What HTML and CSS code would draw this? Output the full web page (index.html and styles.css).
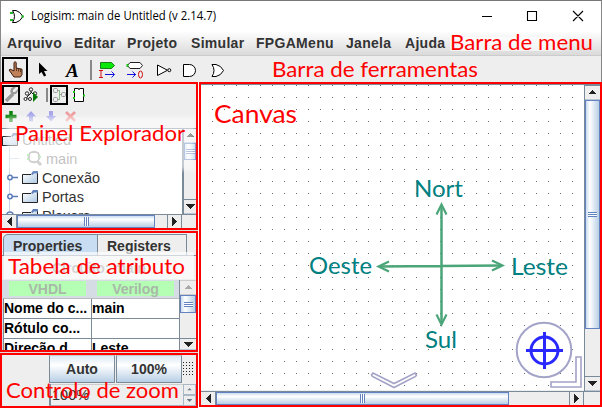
FILE: index.html
```html
<!DOCTYPE html>
<html lang="pt">
<head>
<meta charset="utf-8">
<title>Logisim: main de Untitled (v 2.14.7)</title>
<link rel="stylesheet" href="styles.css">
</head>
<body>
<svg class="defs" width="0" height="0">
  <defs>
    <symbol id="up" viewBox="0 0 9 5"><path d="M4 0h1v1h1v1h1v1h1v1H1V3h1V2h1V1h1z" fill="currentColor"/></symbol>
    <symbol id="down" viewBox="0 0 9 5"><path d="M0 0h9v1H8v1H7v1H6v1H5v1H4V4H3V3H2V2H1V1H0z" fill="currentColor"/></symbol>
    <symbol id="left" viewBox="0 0 5 9"><path d="M5 0v9H4V8H3V7H2V6H1V5H0V4h1V3h1V2h1V1h1V0z" fill="currentColor"/></symbol>
    <symbol id="right" viewBox="0 0 5 9"><path d="M0 0v9h1V8h1V7h1V6h1V5h1V4H4V3H3V2H2V1H1V0z" fill="currentColor"/></symbol>
    <linearGradient id="fold" x2="1" y2="1"><stop stop-color="#fff"/><stop offset="1" stop-color="#a9c6e2"/></linearGradient>
    <symbol id="folder" viewBox="0 0 17 14">
      <path d="M.5 13V3.500h8l1-1h6V13z" fill="url(#fold)"/>
      <path d="M.5 13V3.500h8.500M0 12.500h15.500V2" fill="none" stroke="#222"/>
      <path d="M9 3l2-3h5v2.500h-4L10.500 4z" fill="#5d7fb8"/>
    </symbol>
    <pattern id="grid" x="212" y="85" width="12" height="12" patternUnits="userSpaceOnUse"><rect width="1" height="1" fill="#6e6e6e"/></pattern>
  </defs>
</svg>
<div class="window">
  <header class="titlebar">
    <svg width="14" height="13" viewBox="0 0 14 13"><path d="M2.500.5H6q4 1 7 6-3 5-7 6H2.500q4-6 0-12z" fill="#fff" stroke="#000"/><path d="M0 3h3M0 10h3M12.500 5v3" stroke="#26b526" stroke-width="2"/></svg>
    <svg class="title" width="190" height="20"><text x="0" y="14" textLength="185" lengthAdjust="spacingAndGlyphs">Logisim: main de Untitled (v 2.14.7)</text></svg>
    <svg class="controls" width="104" height="12" viewBox="0 0 104 12"><path d="M0 6.500h10M45.500 1.500h9v9h-9zM91 1l10 10M101 1L91 11" fill="none" stroke="#000" stroke-width="1.100"/></svg>
  </header>
  <nav class="menubar">
    <span class="m1">Arquivo</span><span class="m2">Editar</span><span class="m3">Projeto</span><span class="m4">Simular</span><span class="m5">FPGAMenu</span><span class="m6">Janela</span><span>Ajuda</span>
  </nav>
  <div class="toolbar">
    <svg width="240" height="26" viewBox="0 56 240 26">
      <rect x="3" y="58" width="24" height="24" fill="#eee" stroke="#000" stroke-width="2"/>
      <path d="M14 71v-8.500q1.200-1.500 2.200 0V68l5.800 1.200v5.300L20.500 77H14l-5-7q1-1.500 3 0z" fill="#c08058" stroke="#3a1d10"/>
      <path d="M16.500 68v3M18.500 68.500v3M20.500 69v3" stroke="#3a1d10" stroke-width=".7"/>
      <path d="M39 62.500v11.500l2.500-2 2.500 4.500 2.200-1-2.200-4.500h3.500z" fill="#000"/>
      <text class="letter-tool" x="66" y="77">A</text>
      <path d="M91 60v20" stroke="#888" stroke-width="2"/>
      <path d="M100.500 62.500h11l3 3-3 3h-11z" fill="#0ae80a" stroke="#168016"/>
      <path d="M99 70.500h4M101 70.500v7M99 77.500h4" stroke="#c11"/>
      <path d="M105 74.500h9M111.500 71.500l3 3-3 3M127 74.500h9M132.500 71.500l3 3-3 3" fill="none" stroke="#11d"/>
      <path d="M130 62.500h10l2.500 3-2.500 3h-10l-2.500-3z" fill="#fff" stroke="#222"/><path d="M127.500 64v3" stroke="#18bd18" stroke-width="2"/>
      <ellipse cx="140.500" cy="74.500" rx="2" ry="3.500" fill="none" stroke="#c11"/>
      <path d="M157.500 65v10.500l10-5.250z" fill="#fff" stroke="#000"/><circle cx="169.300" cy="70.200" r="1.500" fill="#fff" stroke="#000"/>
      <path d="M183.500 64.500h6a6 6 0 010 12h-6z" fill="#fff" stroke="#000"/>
      <path d="M212 64.500h4q5 1 7.500 6-2.500 5-7.500 6h-4q4-6 0-12z" fill="#fff" stroke="#000"/>
    </svg>
  </div>
  <main class="workspace">
    <aside class="side">
      <section class="explorer">
        <svg class="tools" width="194" height="44" viewBox="2 84 194 44">
          <rect x="3" y="86" width="16" height="18" fill="#eee" stroke="#000" stroke-width="2"/>
          <path d="M6 101l7-7" stroke="#999" stroke-width="3.500"/><path d="M16 87l-3 3v2h2l3-3q0 5-4 5.500Q9.500 94 10.500 90 12 86 16 87z" fill="#999"/>
          <path d="M31 90v3l-4 4v2M31 92l4 4" fill="none" stroke="#222"/><g fill="#fff" stroke="#222"><circle cx="31" cy="89.500" r="1.700"/><circle cx="27" cy="93.500" r="1.700"/><circle cx="35" cy="93.500" r="1.700"/><circle cx="25.500" cy="99" r="1.500"/><circle cx="30" cy="99" r="1.500"/></g><path d="M33 92v10l5-5z" fill="#087808"/>
          <path d="M47 88v14" stroke="#888" stroke-width="2"/>
          <rect x="51" y="86" width="16" height="18" fill="#eee" stroke="#000" stroke-width="2"/>
          <path d="M56 90.500h4M59.500 90v9M56 99.500h4M59 94.500h3" stroke="#88b888" fill="none"/><g fill="#eee" stroke="#999"><rect x="53.500" y="88.500" width="4" height="4" rx="1"/><rect x="53.500" y="97.500" width="4" height="4" rx="1"/><rect x="61.500" y="92.500" width="4" height="4" rx="1"/></g>
          <path d="M74.500 88.500h9v13h-9z" fill="#fff" stroke="#000"/><path d="M77.500 88.500q1.500 2 3 0" fill="#fff" stroke="#000"/><path d="M73 92h2M73 98h2M83 95.500h2" stroke="#1ccc1c" stroke-width="2"/>
          <path d="M11 111v11M5.500 116.500h11" stroke="#078007" stroke-width="3.500"/>
          <path d="M31 111l5 5.500h-3v5h-4v-5h-3zM49 111h4v5h3l-5 5.500-5-5.500h3z" fill="#a5a5e8"/>
          <path d="M66 112l9 9M75 112l-9 9" stroke="#e99" stroke-width="2.600"/>
        </svg>
        <div class="tree-row">
          <div class="tree">
            <svg class="branches" width="24" height="86" viewBox="2 129 24 86"><path d="M9.500 147v67M9.500 158.500h10" stroke="#c7d3e6" fill="none"/><g fill="#fff" stroke="#5b7cb8" stroke-width="1.500"><path d="M12 177.500h6M12 196.500h6"/><circle cx="10" cy="177.500" r="2.200"/><circle cx="10" cy="196.500" r="2.200"/><path d="M7 215a3 3 0 016 0"/></g></svg>
            <div class="item root"><svg width="17" height="14"><use href="#folder"/></svg><span>Untitled</span></div>
            <div class="item main"><svg width="17" height="17" viewBox="0 0 17 17"><path d="M3.500 2.500h9v9h-9z" fill="#fff" stroke="#999"/><circle cx="8" cy="7" r="5.500" fill="none" stroke="#999" stroke-width="1.600"/><path d="M11 11l4 4" stroke="#999" stroke-width="3"/><path d="M1 5h2M1 9h2M13 7h2" stroke="#7d7" stroke-width="2"/></svg><span>main</span></div>
            <div class="item"><svg width="17" height="14"><use href="#folder"/></svg><span>Conexão</span></div>
            <div class="item"><svg width="17" height="14"><use href="#folder"/></svg><span>Portas</span></div>
            <div class="item"><svg width="17" height="14"><use href="#folder"/></svg><span>Plexers</span></div>
          </div>
          <div class="vbar"><i class="btn"><svg width="9" height="5"><use href="#up"/></svg></i><i class="thumb t1"><b class="grip-v"></b></i><i class="track"></i><i class="btn"><svg width="9" height="5"><use href="#down"/></svg></i></div>
        </div>
        <div class="hbar"><i class="btn"><svg width="5" height="9"><use href="#left"/></svg></i><i class="thumb h1"><b class="grip-h"></b></i><i class="track"></i><i class="btn"><svg width="5" height="9"><use href="#right"/></svg></i><i class="corner"></i></div>
        <div class="veil veil-tree"></div>
        <svg class="note n-explorer" width="180" height="32"><text x="0" y="22" textLength="170" lengthAdjust="spacingAndGlyphs">Painel Explorador</text></svg>
      </section>
      <section class="attributes">
        <div class="tabs"><span class="tab active">Properties</span><span class="tab">Registers</span></div>
        <div class="circuit">Circuito: main</div>
        <div class="attr-row">
          <div class="attr-main">
            <div class="langs"><span>VHDL</span><span>Verilog</span></div>
            <div class="table"><span>Nome do c...</span><span>main</span><span>Rótulo co...</span><span></span><span>Direção d...</span><span>Leste</span></div>
          </div>
          <div class="vbar"><i class="btn faded"><svg width="9" height="5"><use href="#up"/></svg></i><i class="thumb t2"><b class="grip-v"></b></i><i class="track"></i><i class="btn low"><svg width="9" height="5"><use href="#down"/></svg></i></div>
        </div>
        <div class="veil veil-attr"></div>
        <svg class="note n-attr" width="185" height="32"><text x="0" y="22" textLength="177" lengthAdjust="spacingAndGlyphs">Tabela de atributo</text></svg>
      </section>
      <section class="zoom">
        <div class="zoom-row"><span class="zbtn">Auto</span><span class="zbtn">100%</span><svg width="12" height="28" viewBox="184 355 12 28"><path d="M184 362.500h11M184 365.500h11M184 368.500h11M184 371.500h11M184 374.500h11" stroke="#222" stroke-dasharray="1 2"/></svg></div>
        <div class="spin-row"><span class="field">100%</span><span class="spin"><i><svg width="5" height="3" viewBox="0 0 9 5"><use href="#up"/></svg></i><i><svg width="5" height="3" viewBox="0 0 9 5"><use href="#down"/></svg></i></span></div>
        <svg class="note n-zoom" width="180" height="32"><text x="0" y="22" textLength="173" lengthAdjust="spacingAndGlyphs">Controlo de zoom</text></svg>
      </section>
    </aside>
    <section class="canvas">
      <div class="canvas-row">
        <svg class="sheet" width="383" height="305" viewBox="201 85 383 305">
          <rect x="201" y="85" width="383" height="305" fill="#fff"/>
          <rect x="201" y="85" width="376" height="305" fill="url(#grid)"/>
          <g fill="none" stroke="#4aa578" stroke-width="2.500"><path d="M441.500 205v119M379 266.500l123-1"/><path d="M436.500 214.500l5-10 5 10M436.500 314.500l5 10 5-10M389 261.500l-10.500 5 10.500 5M492 260.500l10.500 5-10.500 5" stroke-width="2.200"/></g>
          <g class="points"><text x="414" y="196.500" textLength="49" lengthAdjust="spacingAndGlyphs">Nort</text><text x="309" y="273.500" textLength="63" lengthAdjust="spacingAndGlyphs">Oeste</text><text x="511" y="275" textLength="57" lengthAdjust="spacingAndGlyphs">Leste</text><text x="425" y="347.500" textLength="32" lengthAdjust="spacingAndGlyphs">Sul</text></g>
          <text class="red big" x="214" y="122.500" textLength="83" lengthAdjust="spacingAndGlyphs">Canvas</text>
          <circle cx="544" cy="350" r="27.300" fill="#fff" stroke="#a3a3c8" stroke-width="2"/>
          <g fill="none" stroke="#2828ff" stroke-width="3"><circle cx="544.500" cy="350.500" r="13.500"/><path d="M544.500 332v37M526 350.500h37"/></g>
          <g fill="#fff" stroke="#a3a3c8" stroke-width="1.600"><path d="M576 357h5v30h-30v-5h25z"/><path d="M371.500 375l1.500-2 21 10.500 21-10.500 1.500 2-1 1.500-21.500 11-21.500-11z"/></g>
        </svg>
        <div class="vbar"><i class="btn"><svg width="9" height="5"><use href="#up"/></svg></i><i class="thumb t3"><b class="grip-v"></b></i><i class="track"></i><i class="btn"><svg width="9" height="5"><use href="#down"/></svg></i></div>
      </div>
      <div class="hbar"><i class="btn"><svg width="5" height="9"><use href="#left"/></svg></i><i class="thumb h2"><b class="grip-h"></b></i><i class="track"></i><i class="btn"><svg width="5" height="9"><use href="#right"/></svg></i><i class="corner wide"></i></div>
    </section>
  </main>
  <div class="veil veil-menu"></div>
  <svg class="note n-menu" width="150" height="32"><text x="0" y="22" textLength="143" lengthAdjust="spacingAndGlyphs">Barra de menu</text></svg>
  <svg class="note n-tools" width="215" height="32"><text x="0" y="22" textLength="206" lengthAdjust="spacingAndGlyphs">Barra de ferramentas</text></svg>
</div>
</body>
</html>
```
FILE: styles.css
```css
* { box-sizing: border-box; }
body { margin: 0; background: #eee; font-family: "Liberation Sans", sans-serif; color: #333; overflow: hidden; }
svg { display: block; flex: none; }
.defs { position: absolute; }
.window { position: relative; width: 602px; height: 408px; background: #eee; display: flex; flex-direction: column; box-shadow: inset 0 1px #777, inset 1px 0 #888, inset -1px 0 #888; }
.titlebar { height: 30px; margin: 1px 1px 0; background: #fff; display: flex; align-items: center; padding: 0 15px 0 9px; }
.title { margin-left: 7px; overflow: visible; font: 12px "Open Sans", sans-serif; fill: #000; }
.controls { margin-left: auto; }
.menubar { height: 25px; margin: 0 1px; padding-left: 6px; display: flex; align-items: center; font-weight: bold; font-size: 14px; letter-spacing: .3px; background: linear-gradient(#fff, #dadada); border-bottom: 1px solid #ccc; }
.m1 { width: 67px; } .m2 { width: 53px; } .m3 { width: 64px; } .m4 { width: 65px; } .m5 { width: 90px; } .m6 { width: 59px; }
.toolbar { height: 26px; }
.letter-tool { font: italic bold 19px "Liberation Serif", serif; fill: #000; }
.workspace { display: flex; gap: 1px; height: 326px; background: #fff; }
.side { width: 198px; display: flex; flex-direction: column; gap: 1px; background: #ddd; }
.side > section { position: relative; border: 2px solid #f00; background: #eee; overflow: hidden; }
.explorer { height: 148px; }
.tree-row { display: flex; height: 86px; }
.tree { position: relative; width: 181px; background: #fff; border-top: 1px solid #7a8a99; border-right: 1px solid #7a8a99; overflow: hidden; padding-top: 1px; }
.branches { position: absolute; left: 0; top: 0; }
.item { display: flex; align-items: center; gap: 3px; height: 19px; padding-left: 20px; font-size: 14.5px; }
.item.root { padding-left: 0; color: #888; }
.item.main { padding-left: 24px; color: #777; }
.vbar { display: flex; flex-direction: column; flex: 1; border-left: 1px solid #7a8a99; background: #eee; }
.hbar { display: flex; height: 14px; border-top: 1px solid #7a8a99; }
i { display: flex; align-items: center; justify-content: center; color: #222; }
.vbar .btn { height: 15px; border-top: 1px solid #7a8a99; border-bottom: 1px solid #b8c6d5; }
.vbar .faded { color: #aaa; border-color: #ccc; }
.vbar .low { height: 12px; }
.hbar .btn { width: 15px; border-right: 1px solid #7a8a99; border-left: 1px solid #7a8a99; }
.hbar .btn:first-child { border-left: 0; }
.track { flex: 1; background: #eee; }
.thumb { border: 1px solid #6382bf; }
.vbar .thumb { background: linear-gradient(90deg, #c8dcf0, #fff 30%, #b8cfe5); }
.hbar .thumb { background: linear-gradient(#c8dcf0, #fff 30%, #b8cfe5); }
.t1 { height: 17px; } .t2 { height: 18px; } .t3 { height: 229px; }
.h1 { width: 138px; } .h2 { width: 293px; }
.corner { width: 14px; } .corner.wide { width: 16px; }
.grip-v { width: 9px; height: 5px; background: repeating-linear-gradient(#6382bf 0 1px, #fff 1px 2px); }
.grip-h { width: 5px; height: 9px; background: repeating-linear-gradient(90deg, #6382bf 0 1px, #fff 1px 2px); }
.veil { position: absolute; background: #fff; pointer-events: none; }
.veil-tree { left: 5px; top: 33px; width: 188px; height: 53px; opacity: .55; filter: blur(2px); }
.veil-attr { left: 2px; top: 19px; width: 190px; height: 27px; opacity: .65; }
.veil-menu { left: 450px; top: 37px; width: 112px; height: 14px; opacity: .6; }
.note { position: absolute; overflow: visible; font: 21.5px Lato, sans-serif; fill: #f00; }
.n-explorer { left: 13px; top: 34.500px; }
.n-attr { left: 6px; top: 19px; }
.n-zoom { left: 4px; top: 20.500px; }
.n-menu { left: 450px; top: 28px; }
.n-tools { left: 272px; top: 55px; }
.attributes { height: 121px; }
.tabs { display: flex; height: 23px; padding: 1px 0 0 1px; border-bottom: 1px solid #7a8a99; }
.tab { width: 89px; padding-left: 9px; line-height: 22px; font-size: 14px; font-weight: bold; border: solid #7a8a99; border-width: 1px 1px 0 0; }
.tab.active { width: 95px; background: #c8ddf2; border-left-width: 1px; border-top-left-radius: 5px; }
.circuit { height: 24px; font-size: 14px; font-weight: bold; color: #888; text-align: center; line-height: 25px; }
.attr-row { display: flex; height: 70px; }
.attr-main { width: 177px; padding: 0 0 0 1px; background: #d6dce4; }
.langs { height: 18px; display: flex; gap: 11px; padding: 1px 0 2px 6px; }
.langs span { width: 77px; background: #b4ffb4; color: #a9b8a9; font-weight: bold; font-size: 14px; line-height: 16px; text-align: center; }
.table { display: grid; grid-template-columns: 87px 87px; grid-auto-rows: 19px; gap: 1px; background: #7a8a99; border: 1px solid #7a8a99; border-top-color: #bbb; width: 177px; }
.table span { background: #fff; color: #000; font-weight: bold; font-size: 14px; line-height: 19px; overflow: hidden; white-space: nowrap; }
.zoom { height: 55px; }
.zoom-row { display: flex; height: 28px; padding-left: 47px; }
.zbtn { width: 66px; margin-right: 1px; border: 1px solid #7a8a99; border-top-color: #ccc; background: linear-gradient(#dde9f5, #fff 35%, #b8cfe5); font-weight: bold; font-size: 14px; text-align: center; line-height: 27px; }
.spin-row { display: flex; height: 23px; padding: 1px 0 0 47px; }
.field { width: 134px; border-left: 2px solid #7a8a99; border-bottom: 1px solid #aab; box-shadow: inset 0 1px #ccc; font-size: 14.5px; line-height: 22px; padding-left: 1px; }
.spin { flex: 1; display: flex; flex-direction: column; }
.spin i { flex: 1; border: 1px solid #aab7c4; color: #678; }
.canvas { width: 403px; height: 325px; border: 2px solid #f00; background: #eee; }
.canvas-row { display: flex; height: 307px; border-top: 1px solid #7a8a99; }
.points { font: 22.5px Lato, sans-serif; fill: #008080; }
.red { fill: #f00; }
.big { font: 25.5px Lato, sans-serif; }
```
